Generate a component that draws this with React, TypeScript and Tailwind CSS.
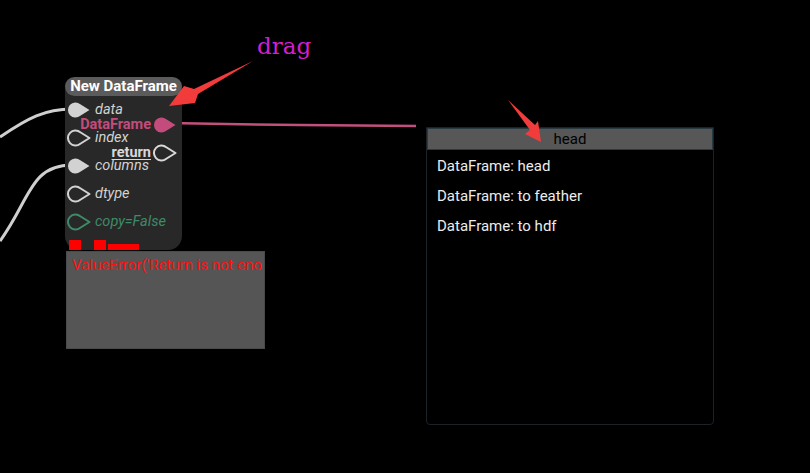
import React from 'react'

const font = { fontFamily: 'Roboto, "Liberation Sans", sans-serif' }

// teardrop socket pointing right, circle centred at (8.5,9)
function Socket({ fill, stroke }: { fill: string; stroke: string }) {
  return (
    <svg width="24" height="18" viewBox="0 0 24 18" className="shrink-0">
      <path
        d="M22.5 9 L13.3 3.25 A7.5 7.5 0 1 0 13.3 14.75 Z"
        fill={fill}
        stroke={stroke}
        strokeWidth={fill === stroke ? 0 : 2}
        strokeLinejoin="round"
      />
    </svg>
  )
}

const inputs = [
  { name: 'data', filled: true, color: '#d2d2d2' },
  { name: 'index', filled: false, color: '#d2d2d2' },
  { name: 'columns', filled: true, color: '#d2d2d2' },
  { name: 'dtype', filled: false, color: '#d2d2d2' },
  { name: 'copy=False', filled: false, color: '#3f8a68' },
]

const items = ['DataFrame: head', 'DataFrame: to feather', 'DataFrame: to hdf']

export default function App() {
  return (
    <div className="relative w-[810px] h-[473px] overflow-hidden bg-black" style={font}>
      {/* wires */}
      <svg className="absolute left-0 top-0" width="810" height="473">
        <path d="M0 137 C 28 118, 45 109, 72 109" fill="none" stroke="#cfcfcf" strokeWidth="3" />
        <path d="M0 241 C 30 200, 30 165, 72 165" fill="none" stroke="#cfcfcf" strokeWidth="3" />
        <path d="M168 123 L 226 124 L 300 125 L 416 126" fill="none" stroke="#c2507d" strokeWidth="2.5" />
      </svg>

      <div
        className="absolute left-[257px] top-[35px] text-[23px] leading-none text-[#d21fd2]"
        style={{ fontFamily: '"DejaVu Serif", "Liberation Serif", serif' }}
      >
        drag
      </div>

      {/* node */}
      <div className="absolute left-[65px] top-[77px] w-[117px] h-[173px] rounded-[14px] bg-[#282828]">
        <div className="h-[19px] rounded-full bg-[#5b5b5b] text-white font-bold text-[15px] leading-[19px] text-center">
          New DataFrame
        </div>
        <div className="absolute left-[2px] top-[19px] flex flex-col">
          {inputs.map((p) => (
            <div key={p.name} className="h-[28px] flex items-center gap-[4px]">
              <Socket fill={p.filled ? p.color : '#282828'} stroke={p.color} />
              <span className="italic text-[14.5px]" style={{ color: p.color }}>{p.name}</span>
            </div>
          ))}
        </div>
        <div className="absolute right-[5px] top-[34px] flex flex-col items-end">
          <div className="h-[28px] flex items-center gap-[2px]">
            <span className="font-bold text-[14.5px] text-[#c44c7d]">DataFrame</span>
            <Socket fill="#c44c7d" stroke="#c44c7d" />
          </div>
          <div className="h-[28px] flex items-center gap-[2px]">
            <span className="font-bold text-[14.5px] text-[#d8d8d8] underline underline-offset-2">return</span>
            <Socket fill="#282828" stroke="#d8d8d8" />
          </div>
        </div>
        <div className="absolute left-[4px] top-[163px] flex items-end">
          <div className="w-[12px] h-[10px] bg-[#ff0000]" />
          <div className="w-[12px] h-[10px] bg-[#ff0000] ml-[13px]" />
          <div className="w-[31px] h-[6px] bg-[#ff0000] ml-[2px]" />
        </div>
      </div>

      {/* error box */}
      <div className="absolute left-[66px] top-[251px] w-[199px] h-[98px] bg-[#555555] border border-[#4a4a4a] overflow-hidden">
        <div className="pl-[5px] pt-[2px] text-[15px] text-[#ff1010] whitespace-nowrap">
          ValueError('Return is not eno
        </div>
      </div>

      {/* search popup */}
      <div className="absolute left-[426px] top-[127px] w-[288px] h-[298px] rounded-b-[4px] border border-[#1c2226] bg-black">
        <div className="h-[22px] bg-[#575757] border border-[#2a3a42] text-[15px] leading-[20px] text-black text-center">
          head
        </div>
        <div className="flex flex-col pt-[1px]">
          {items.map((t) => (
            <div key={t} className="h-[30px] px-[10px] flex items-center text-[15px] text-[#ececec]">
              {t}
            </div>
          ))}
        </div>
      </div>

      {/* annotation arrows, drawn over everything */}
      <svg className="absolute left-0 top-0 pointer-events-none" width="810" height="473">
        <path d="M253 61 L 194 89 L 184 86 L 169 106 L 195 103 L 198 94 Z" fill="#f23c3c" />
        <path d="M508 100 L 535 125 L 538 121 L 541 142 L 525 134 L 530 130 Z" fill="#f23c3c" />
      </svg>
    </div>
  )
}
